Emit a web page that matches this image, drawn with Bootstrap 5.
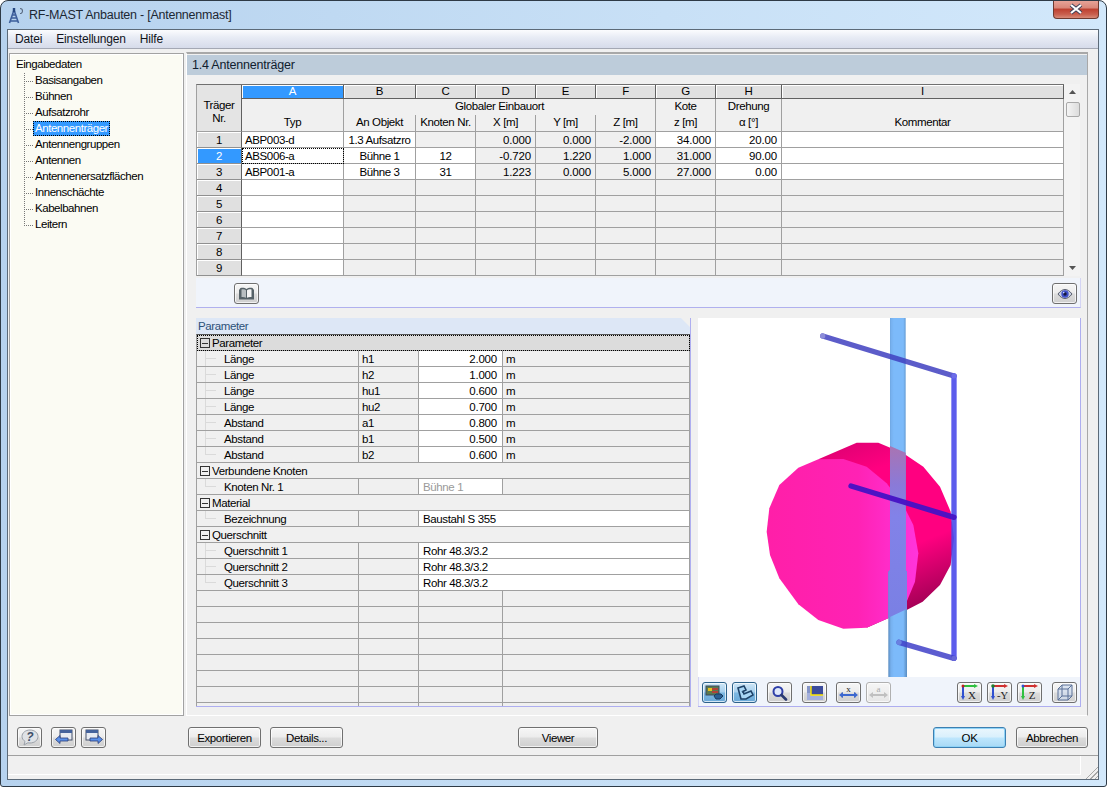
<!DOCTYPE html>
<html lang="de">
<head>
    <meta charset="UTF-8">
    <meta name="viewport" content="width=device-width, initial-scale=1.0">
    <title>RF-MAST Anbauten - [Antennenmast]</title>

    <link href="https://cdn.jsdelivr.net/npm/bootstrap@5.3.0/dist/css/bootstrap.min.css" rel="stylesheet">

    <style>
        html, body { margin: 0; background: #fff; }
        body { font-family: "Liberation Sans", Arial, sans-serif; font-size: 11.5px; line-height: 15px; letter-spacing: -.38px; color: #000; }

        /* window frame */
        .app-window {
            width: 1107px; height: 787px; overflow: hidden;
            border: 1px solid #2e3a46; border-radius: 8px 8px 3px 3px;
            padding: 0 7px 6px 6px;
            background: linear-gradient(90deg, #b6d2ee 0, #c8e0f6 60%, #d2e8fb 100%);
        }
        .title-bar { height: 28px; font-size: 12.5px; letter-spacing: -.24px; color: #1c2733; }
        .app-icon { margin: 1px 4px 0 1px; }
        .close-btn {
            width: 46px; height: 19px; margin-top: -1px; border: 1px solid #6e3a30; border-top: 0;
            border-radius: 0 0 4px 4px; padding: 0;
            background: linear-gradient(#e9a79c 0, #d98678 45%, #bd3f2f 50%, #c9604f 80%, #d78a78 100%);
        }
        .client-area { border: 1px solid #5c6a78; background: #f0f0f0; min-height: 0; }

        /* menu */
        .menu-bar { height: 19px; padding: 0; border-bottom: 1px solid #a4a8b4; background: linear-gradient(#fbfcfe 0, #e8ecf5 40%, #d6dbea 100%); }
        .menu-bar .navbar-nav { margin-left: -7px; }
        .menu-bar.navbar-expand .navbar-nav .nav-link { padding: 1px 0 0 0; margin-left: 14px; color: #10141c; font-size: 12px; letter-spacing: -.18px; }

        .main-area { height: 667px; padding: 3px 10px 0 1px; }

        /* navigation tree */
        .nav-tree { width: 175px; margin-top: 1px; border: 1px solid #a2a2a2; background: #fbfbf3; padding: 3px 0 0 6px; box-shadow: inset 0 0 0 1px #fff; letter-spacing: -.45px; }
        .nav-tree .tree-root { height: 16px; line-height: 15px; }
        .nav-tree ul { margin: 0 0 0 8px; padding: 0; list-style: none; }
        .nav-tree li {
            height: 16px; padding-left: 11px; line-height: 15px;
            background-image: repeating-linear-gradient(90deg, #777 0 1px, transparent 1px 2px), repeating-linear-gradient(180deg, #777 0 1px, transparent 1px 2px);
            background-size: 9px 1px, 1px 100%; background-position: 0 8px, 0 0; background-repeat: no-repeat;
        }
        .nav-tree li:last-child { background-size: 9px 1px, 1px 9px; }
        .nav-tree li.is-active span { display: inline-block; margin-left: -2px; padding: 0 2px; height: 15px; background: #3399ff; color: #fff; outline: 1px dotted #000; outline-offset: -1px; }

        /* right pane */
        .content-pane { width: 902px; margin-left: 2px; border-style: solid; border-width: 2px 1px 1px 1px; border-color: #a8a8a8 #a8a8a8 #fff #fff; }
        .pane-heading { height: 20px; margin-top: 1px; padding-left: 5px; background: #bdccda; font-size: 12.5px; letter-spacing: -.2px; line-height: 20px; color: #10202e; }
        .pane-body { padding: 9px 7px 0 9px; }

        /* spreadsheet tables */
        .sheet { border-collapse: separate; border-spacing: 0; table-layout: fixed; width: auto; }
        .sheet td, .sheet th { padding: 0; border-right: 1px solid #a0a0a0; border-bottom: 1px solid #a0a0a0; background: #f0f0f0; font-weight: 400; height: 16px; line-height: 14px; white-space: nowrap; overflow: hidden; }
        .sheet .is-white { background: #fff; }
        .input-sheet { border-top: 1px solid #707070; border-left: 1px solid #a0a0a0; }
        .input-sheet col:nth-child(1) { width: 45px; }
        .input-sheet col:nth-child(2) { width: 102px; }
        .input-sheet col:nth-child(3) { width: 72px; }
        .input-sheet col:nth-child(n+4) { width: 60px; }
        .input-sheet col:nth-child(9) { width: 66px; }
        .input-sheet col:nth-child(10) { width: 282px; }
        .input-sheet .col-letter { height: 14px; line-height: 12px; padding-bottom: 1px; text-align: center; background: #e0e0e0; border-bottom-color: #606060; border-right-color: #606060; box-shadow: inset 1px 1px 0 #fff; }
        .input-sheet .col-letter.is-selected { background: #3399ff; color: #fff; }
        .input-sheet .row-head { text-align: center; background: #e0e0e0; border-right-color: #606060; border-bottom-color: #909090; box-shadow: inset 1px 1px 0 #fff; }
        .input-sheet .row-head.is-selected { background: #3399ff; color: #fff; }
        .input-sheet .corner-head { background: #e4e4e4; text-align: center; vertical-align: top; padding-top: 14px; line-height: 13px; border-right-color: #606060; }
        .input-sheet .band-top { border-bottom: 0; text-align: center; height: 16px; padding-bottom: 2px; }
        .input-sheet .band-bottom { text-align: center; height: 17px; vertical-align: bottom; padding-bottom: 2px; }
        .input-sheet .band-tall { text-align: center; vertical-align: bottom; padding-bottom: 2px; }
        .input-sheet .num { text-align: right; padding-right: 4px; letter-spacing: -.15px; }
        .input-sheet .ctr { text-align: center; }
        .input-sheet .txt { padding-left: 3px; }
        .input-sheet .is-focus { outline: 1px dotted #000; outline-offset: -1px; }
        .v-scroll { width: 16px; height: 192px; background: #f3f3f3; }
        .v-scroll .scroll-thumb { width: 14px; height: 15px; margin: 2px 0 0 2px; border: 1px solid #a8a8a8; border-radius: 2px; background: linear-gradient(90deg, #f4f4f4, #dcdcdc); }
        .v-scroll .scroll-arrow { height: 16px; }

        .icon-strip { height: 30px; margin-top: 2px; width: 885px; padding: 5px 3px 0 38px; background: #f0f4fb; border-bottom: 1px solid #b0b0ee; border-right: 1px solid #d4d4f4; }

        /* small icon buttons */
        .tool-btn { width: 25px; height: 21px; padding: 0; display: inline-flex; align-items: center; justify-content: center; flex-shrink: 0; border: 1px solid #6f6f6f; border-radius: 3px; background: linear-gradient(#f6f6f6 0, #ececec 48%, #dcdcdc 52%, #cfcfcf 100%); box-shadow: inset 0 0 0 1px rgba(255,255,255,.7); }
        .tool-btn.is-on { border-color: #2c628b; background: linear-gradient(#cfe6f7 0, #a6d0ee 48%, #7db8e2 52%, #6aa9d8 100%); }
        .tool-btn.is-off { border-color: #b0b0b0; background: linear-gradient(#f6f6f6, #e6e6e6); }
        .gap-near { margin-left: 5px; }
        .gap-far { margin-left: 10px; }
        .gap-far-9 { margin-left: 9px; }

        .lower-row { margin-top: 10px; }
        .param-panel { width: 495px; height: 389px; border-right: 1px solid #aeaef0; border-bottom: 1px solid #aeaef0; }
        .param-title { height: 16px; line-height: 16px; padding-left: 2px; color: #2c5078; background: #dde7f6; clip-path: polygon(0 0, calc(100% - 9px) 0, 100% 9px, 100% 100%, 0 100%); }
        .param-wrap { height: 372px; overflow: hidden; border-top: 1px solid #555; border-left: 1px solid #a0a0a0; }
        .param-sheet col:nth-child(1) { width: 162px; }
        .param-sheet col:nth-child(2) { width: 60px; }
        .param-sheet col:nth-child(3) { width: 84px; }
        .param-sheet col:nth-child(4) { width: 187px; }
        .param-sheet tr.group-row td { padding: 1px 0 0 3px; }
        .param-sheet tr.group-row.is-focus td { background: #dcdcdc; outline: 1px dotted #000; outline-offset: -1px; }
        .collapse-box { display: inline-block; width: 10px; height: 10px; margin-right: 2px; border: 1px solid #333; background: linear-gradient(#333,#333) center/6px 1px no-repeat; vertical-align: -1px; }
        .param-sheet .leaf { padding: 1px 0 0 27px;
            background-image: linear-gradient(#dadada,#dadada), linear-gradient(#dadada,#dadada);
            background-size: 11px 1px, 1px 100%; background-position: 8px 7px, 8px 0; background-repeat: no-repeat; }
        .param-sheet .leaf.is-end { background-size: 11px 1px, 1px 8px; }
        .param-sheet .sym { padding-left: 3px; }
        .param-sheet .val { text-align: right; padding-right: 5px; letter-spacing: -.2px; }
        .param-sheet .val-text { padding-left: 4px; }
        .param-sheet .unit { padding-left: 3px; }
        .param-sheet .muted { color: #9a9a9a; padding-left: 4px; }

        .view-panel { width: 383px; height: 389px; margin-left: 7px; border-right: 1px solid #aeaef0; border-bottom: 1px solid #aeaef0; }
        .view-canvas { display: block; background: #fff; }
        .view-tools { height: 29px; padding: 5px 3px 0 3px; background: #f0f4fb; border-left: 1px solid #d4d4f4; }

        /* dialog buttons */
        .footer-row { height: 39px; padding: 11px 10px 0 9px; }
        .dlg-btn { height: 21px; padding: 0; font-size: 11.5px; line-height: 18px; letter-spacing: -.38px; color: #000; border: 1px solid #707070; border-radius: 3px; background: linear-gradient(#f6f6f6 0, #ececec 48%, #dcdcdc 52%, #cfcfcf 100%); box-shadow: inset 0 0 0 1px rgba(255,255,255,.7); }
        .dlg-default { border-color: #3c7fb1; background: linear-gradient(#eaf6fd 0, #d9f0fc 48%, #bee6fd 52%, #a7d9f5 100%); box-shadow: inset 0 0 0 1px #8fd3f7; }
        .w-72 { width: 72px; }
        .w-73 { width: 73px; }
        .w-80 { width: 80px; }
        .btn-export { margin-left: 82px; }
        .btn-viewer { margin-left: 175px; }
        .status-row { height: 24px; border-top: 1px solid #a0a0a0; }
        .status-cell { width: 1073px; height: 19px; border-right: 1px solid #fff; border-bottom: 1px solid #fff; }
        .size-grip { width: 14px; height: 14px; margin-top: 9px; background: repeating-linear-gradient(135deg, transparent 0 2px, #a8a8a8 2px 3px); clip-path: polygon(100% 0, 100% 100%, 0 100%); }
    </style>
</head>
<body>

<div class="app-window d-flex flex-column">

    <div class="title-bar d-flex align-items-center">
        <svg class="app-icon" width="17" height="17" viewBox="0 0 17 17">
            <path d="M6 3 1.500 16M6 3l4.500 13M3.500 11h5M2.500 14h7M4.500 8h3" fill="none" stroke="#3d5f9c" stroke-width="1.600"/>
            <path d="M12 1.500a2.500 2.500 0 1 1 0 5" fill="none" stroke="#5a6a80" stroke-width="1.100"/>
            <path d="M6 1v4" stroke="#24457f" stroke-width="2.400"/>
        </svg>
        <span>RF-MAST Anbauten - [Antennenmast]</span>
        <button type="button" class="close-btn ms-auto align-self-start d-flex align-items-center justify-content-center" aria-label="Schließen">
            <svg width="16" height="12" viewBox="0 0 16 12"><path d="M3 2l10 8M13 2 3 10" stroke="#3a3f58" stroke-width="4"/><path d="M3 2l10 8M13 2 3 10" stroke="#fff" stroke-width="2.200"/></svg>
        </button>
    </div>

    <div class="client-area flex-grow-1 d-flex flex-column">

        <nav class="navbar navbar-expand menu-bar">
            <ul class="navbar-nav">
                <li class="nav-item"><a class="nav-link" href="#">Datei</a></li>
                <li class="nav-item"><a class="nav-link" href="#">Einstellungen</a></li>
                <li class="nav-item"><a class="nav-link" href="#">Hilfe</a></li>
            </ul>
        </nav>

        <div class="main-area d-flex">

            <div class="nav-tree flex-shrink-0">
                <div class="tree-root">Eingabedaten</div>
                <ul>
                    <li><span>Basisangaben</span></li>
                    <li><span>Bühnen</span></li>
                    <li><span>Aufsatzrohr</span></li>
                    <li class="is-active"><span>Antennenträger</span></li>
                    <li><span>Antennengruppen</span></li>
                    <li><span>Antennen</span></li>
                    <li><span>Antennenersatzflächen</span></li>
                    <li><span>Innenschächte</span></li>
                    <li><span>Kabelbahnen</span></li>
                    <li><span>Leitern</span></li>
                </ul>
            </div>

            <div class="content-pane flex-shrink-0">
                <div class="pane-heading">1.4 Antennenträger</div>
                <div class="pane-body">

                    <div class="d-flex">
                        <table class="sheet input-sheet">
                            <colgroup>
                                <col><col><col><col><col><col><col><col><col><col>
                            </colgroup>
                            <thead>
                                <tr>
                                    <th class="corner-head" rowspan="3">Träger<br>Nr.</th>
                                    <th class="col-letter is-selected">A</th>
                                    <th class="col-letter">B</th><th class="col-letter">C</th><th class="col-letter">D</th><th class="col-letter">E</th><th class="col-letter">F</th><th class="col-letter">G</th><th class="col-letter">H</th><th class="col-letter">I</th>
                                </tr>
                                <tr>
                                    <th class="band-tall" rowspan="2">Typ</th>
                                    <th class="band-top" colspan="5">Globaler Einbauort</th>
                                    <th class="band-top">Kote</th>
                                    <th class="band-top">Drehung</th>
                                    <th class="band-tall" rowspan="2">Kommentar</th>
                                </tr>
                                <tr>
                                    <th class="band-bottom">An Objekt</th>
                                    <th class="band-bottom">Knoten Nr.</th>
                                    <th class="band-bottom">X [m]</th>
                                    <th class="band-bottom">Y [m]</th>
                                    <th class="band-bottom">Z [m]</th>
                                    <th class="band-bottom">z [m]</th>
                                    <th class="band-bottom">α [°]</th>
                                </tr>
                            </thead>
                            <tbody>
                                <tr>
                                    <th class="row-head">1</th>
                                    <td class="is-white txt">ABP003-d</td>
                                    <td class="is-white ctr">1.3 Aufsatzro</td>
                                    <td></td>
                                    <td class="num">0.000</td><td class="num">0.000</td><td class="num">-2.000</td>
                                    <td class="is-white num">34.000</td><td class="is-white num">20.00</td><td class="is-white"></td>
                                </tr>
                                <tr>
                                    <th class="row-head is-selected">2</th>
                                    <td class="is-white txt is-focus">ABS006-a</td>
                                    <td class="is-white ctr">Bühne 1</td>
                                    <td class="is-white ctr">12</td>
                                    <td class="num">-0.720</td><td class="num">1.220</td><td class="num">1.000</td>
                                    <td class="num">31.000</td><td class="is-white num">90.00</td><td class="is-white"></td>
                                </tr>
                                <tr>
                                    <th class="row-head">3</th>
                                    <td class="is-white txt">ABP001-a</td>
                                    <td class="is-white ctr">Bühne 3</td>
                                    <td class="is-white ctr">31</td>
                                    <td class="num">1.223</td><td class="num">0.000</td><td class="num">5.000</td>
                                    <td class="num">27.000</td><td class="is-white num">0.00</td><td class="is-white"></td>
                                </tr>
                                <tr><th class="row-head">4</th><td class="is-white"></td><td></td><td></td><td></td><td></td><td></td><td></td><td></td><td></td></tr>
                                <tr><th class="row-head">5</th><td class="is-white"></td><td></td><td></td><td></td><td></td><td></td><td></td><td></td><td></td></tr>
                                <tr><th class="row-head">6</th><td class="is-white"></td><td></td><td></td><td></td><td></td><td></td><td></td><td></td><td></td></tr>
                                <tr><th class="row-head">7</th><td class="is-white"></td><td></td><td></td><td></td><td></td><td></td><td></td><td></td><td></td></tr>
                                <tr><th class="row-head">8</th><td class="is-white"></td><td></td><td></td><td></td><td></td><td></td><td></td><td></td><td></td></tr>
                                <tr><th class="row-head">9</th><td class="is-white"></td><td></td><td></td><td></td><td></td><td></td><td></td><td></td><td></td></tr>
                            </tbody>
                        </table>

                        <div class="v-scroll d-flex flex-column flex-shrink-0">
                            <div class="scroll-arrow d-flex align-items-center justify-content-center"><svg width="7" height="4"><path d="M3.500 0 7 4H0z" fill="#555"/></svg></div>
                            <div class="scroll-thumb"></div>
                            <div class="scroll-arrow mt-auto d-flex align-items-center justify-content-center"><svg width="7" height="4"><path d="M0 0h7L3.500 4z" fill="#555"/></svg></div>
                        </div>
                    </div>

                    <div class="icon-strip d-flex justify-content-between">
                        <button type="button" class="tool-btn" aria-label="Bibliothek">
                            <svg width="17" height="14" viewBox="0 0 17 14"><path d="M1 3 2.500 1c2-.5 4.500-.3 6 1 1.500-1.300 4-1.500 6-1L16 3v9.500H1z" fill="#566268"/><path d="M3.500 2.500c1.800-.4 3.500-.2 4.500.8v7.500c-1.200-.8-2.800-1-4.500-.8z" fill="#b9bfc2"/><path d="M9 3.300c1-1 2.700-1.200 4.500-.8v7.500c-1.700-.2-3.300 0-4.500.8z" fill="#f6f6f6"/></svg>
                        </button>
                        <button type="button" class="tool-btn" aria-label="Ansicht">
                            <svg width="18" height="12" viewBox="0 0 18 12"><path d="M2 6c2.300-3 4.500-4.500 7-4.500s4.700 1.500 7 4.500c-2.300 3-4.500 4.500-7 4.500S4.300 9 2 6z" fill="#c8cfe0" stroke="#5a6070"/><circle cx="9" cy="6" r="3.700" fill="#3f50c8"/><circle cx="9" cy="6" r="1.700" fill="#14183c"/><circle cx="7.700" cy="4.600" r=".8" fill="#cfe0ff"/></svg>
                        </button>
                    </div>

                    <div class="lower-row d-flex">
                        <div class="param-panel flex-shrink-0">
                            <div class="param-title">Parameter</div>
                            <div class="param-wrap">
                                <table class="sheet param-sheet">
                                    <colgroup><col><col><col><col></colgroup>
                                    <tbody>
                                        <tr class="group-row is-focus"><td colspan="4"><span class="collapse-box"></span>Parameter</td></tr>
                                        <tr><td class="leaf">Länge</td><td class="sym">h1</td><td class="is-white val">2.000</td><td class="unit">m</td></tr>
                                        <tr><td class="leaf">Länge</td><td class="sym">h2</td><td class="is-white val">1.000</td><td class="unit">m</td></tr>
                                        <tr><td class="leaf">Länge</td><td class="sym">hu1</td><td class="is-white val">0.600</td><td class="unit">m</td></tr>
                                        <tr><td class="leaf">Länge</td><td class="sym">hu2</td><td class="is-white val">0.700</td><td class="unit">m</td></tr>
                                        <tr><td class="leaf">Abstand</td><td class="sym">a1</td><td class="is-white val">0.800</td><td class="unit">m</td></tr>
                                        <tr><td class="leaf">Abstand</td><td class="sym">b1</td><td class="is-white val">0.500</td><td class="unit">m</td></tr>
                                        <tr><td class="leaf is-end">Abstand</td><td class="sym">b2</td><td class="is-white val">0.600</td><td class="unit">m</td></tr>
                                        <tr class="group-row"><td colspan="4"><span class="collapse-box"></span>Verbundene Knoten</td></tr>
                                        <tr><td class="leaf is-end">Knoten Nr. 1</td><td></td><td class="is-white muted">Bühne 1</td><td></td></tr>
                                        <tr class="group-row"><td colspan="4"><span class="collapse-box"></span>Material</td></tr>
                                        <tr><td class="leaf is-end">Bezeichnung</td><td></td><td class="is-white val-text" colspan="2">Baustahl S 355</td></tr>
                                        <tr class="group-row"><td colspan="4"><span class="collapse-box"></span>Querschnitt</td></tr>
                                        <tr><td class="leaf">Querschnitt 1</td><td></td><td class="is-white val-text" colspan="2">Rohr 48.3/3.2</td></tr>
                                        <tr><td class="leaf">Querschnitt 2</td><td></td><td class="is-white val-text" colspan="2">Rohr 48.3/3.2</td></tr>
                                        <tr><td class="leaf is-end">Querschnitt 3</td><td></td><td class="is-white val-text" colspan="2">Rohr 48.3/3.2</td></tr>
                                        <tr><td></td><td></td><td></td><td></td></tr>
                                        <tr><td></td><td></td><td></td><td></td></tr>
                                        <tr><td></td><td></td><td></td><td></td></tr>
                                        <tr><td></td><td></td><td></td><td></td></tr>
                                        <tr><td></td><td></td><td></td><td></td></tr>
                                        <tr><td></td><td></td><td></td><td></td></tr>
                                        <tr><td></td><td></td><td></td><td></td></tr>
                                        <tr><td></td><td></td><td></td><td></td></tr>
                                    </tbody>
                                </table>
                            </div>
                        </div>

                        <div class="view-panel d-flex flex-column flex-shrink-0">
                            <!-- coordinates taken at 3x from the view's corner at (700,315) -->
                            <svg class="view-canvas" width="382" height="359" viewBox="698 318 382 359">
                                <defs>
                                    <linearGradient id="discSide" x1="0" y1="0" x2="0.3" y2="1">
                                        <stop offset="0" stop-color="#d80070"/><stop offset=".25" stop-color="#ff0080"/><stop offset=".7" stop-color="#ff0080"/><stop offset="1" stop-color="#a80058"/>
                                    </linearGradient>
                                    <linearGradient id="discFront" x1="0" y1="0" x2="1" y2="0">
                                        <stop offset="0" stop-color="#ff1fa8"/><stop offset=".6" stop-color="#ff22b4"/><stop offset="1" stop-color="#ff35dc"/>
                                    </linearGradient>
                                    <linearGradient id="mastFill" x1="0" y1="0" x2="1" y2="0">
                                        <stop offset="0" stop-color="#5a8cc0"/><stop offset=".14" stop-color="#76b0ee"/><stop offset=".3" stop-color="#7cbafa"/><stop offset=".8" stop-color="#7cbafa"/><stop offset="1" stop-color="#5a8cc0"/>
                                    </linearGradient>
                                    <linearGradient id="mastOverDisc" gradientUnits="userSpaceOnUse" x1="0" y1="398" x2="0" y2="910">
                                        <stop offset="0" stop-color="#a874b4"/><stop offset=".22" stop-color="#8a7ad8"/><stop offset=".4" stop-color="#8282e8"/><stop offset="1" stop-color="#7a80e4"/>
                                    </linearGradient>
                                </defs>
                                <g transform="translate(700 315) scale(.33333)">
                                    <path d="M355 433 470 383 535 383 610 415 670 455 720 515 752 590 762 670 752 750 720 810 668 860 620 885 500 938 560 600z" fill="url(#discSide)"/>
                                    <path d="M200 650 208 580 238 510 295 458 355 433 430 432 500 455 560 505 610 570 640 630 655 715 645 800 620 860 565 910 500 938 430 941 355 915 295 868 238 790 210 720z" fill="url(#discFront)"/>
                                    <path d="M570 9H617V765L621 770V1086H565V770L570 765z" fill="url(#mastFill)"/>
                                    <path d="M570 393 617 413V765L621 770V882L565 908V770L570 765z" fill="url(#mastOverDisc)"/>
                                    <g fill="none" stroke-linecap="round" stroke-width="16">
                                        <path d="M368 63 762 183" stroke="#4040c0" stroke-opacity=".85"/>
                                        <path d="M762 183V1030" stroke="#4a4aea" stroke-opacity=".9"/>
                                        <path d="M597 982 762 1030" stroke="#4040c8" stroke-opacity=".85"/>
                                        <path d="M453 513 762 607" stroke="#4512c4" stroke-opacity=".95"/>
                                    </g>
                                    <circle cx="368" cy="63" r="8" fill="#8c8cd8"/>
                                    <circle cx="597" cy="982" r="8" fill="#6a80e0"/>
                                    <circle cx="762" cy="183" r="8" fill="#6c6ce8"/>
                                    <circle cx="762" cy="1030" r="8" fill="#6868d8"/>
                                </g>
                            </svg>
                            <div class="view-tools d-flex justify-content-between">
                                <div class="d-flex">
                                    <button type="button" class="tool-btn is-on" aria-label="Modell">
                                        <svg width="19" height="15" viewBox="0 0 19 15"><rect x="1" y="1" width="13" height="9" fill="#5b7a50" stroke="#3a4a60"/><rect x="3" y="3" width="4" height="3" fill="#e8c020"/><path d="M7 4h6M7 7h6" stroke="#d03030" stroke-width="1.500"/><path d="M11 9h5l2 2-3 3h-4l-2-3z" fill="#2a5f92" stroke="#173a60"/></svg>
                                    </button>
                                    <button type="button" class="tool-btn is-on gap-near" aria-label="Werte">
                                        <svg width="18" height="15" viewBox="0 0 18 15"><path d="M2 3 8 1l2 4-3 1.500L8 9l7-3 2 4-7 4H5z" fill="#a9d6f5" stroke="#1e4268" stroke-width="1.600"/><path d="M6 6.500 8 9" stroke="#1e4268"/></svg>
                                    </button>
                                    <button type="button" class="tool-btn gap-far" aria-label="Zoom">
                                        <svg width="17" height="16" viewBox="0 0 17 16"><circle cx="7" cy="6.500" r="4.500" fill="#dfe8fb" stroke="#2f3fa8" stroke-width="2"/><path d="M10.500 10 15 14.500" stroke="#2a3a70" stroke-width="2.600" stroke-linecap="round"/></svg>
                                    </button>
                                    <button type="button" class="tool-btn gap-far" aria-label="Farben">
                                        <svg width="18" height="16" viewBox="0 0 18 16"><rect x="1" y="8" width="16" height="7" fill="#a4b0dc"/><rect x="1" y="1" width="4" height="7" fill="#8494c8"/><rect x="5" y="1" width="12" height="9" fill="#3c4c9c"/><path d="M5 1v9h12" fill="none" stroke="#ffe800" stroke-width="1.400"/></svg>
                                    </button>
                                    <button type="button" class="tool-btn gap-far-9" aria-label="Bemaßung">
                                        <svg width="21" height="17" viewBox="0 0 21 17"><text x="10.500" y="8" text-anchor="middle" font-family="Liberation Serif, serif" font-size="9" fill="#222">x</text><path d="M4 8.500v5M17 8.500v5" stroke="#667" stroke-width="1"/><path d="M1 11l4-3v2h11V8l4 3-4 3v-2H5v2z" fill="#3c68d0"/></svg>
                                    </button>
                                    <button type="button" class="tool-btn is-off gap-near" aria-label="Bezeichnung">
                                        <svg width="21" height="17" viewBox="0 0 21 17"><text x="10.500" y="8" text-anchor="middle" font-family="Liberation Serif, serif" font-size="9" fill="#aaa">a</text><path d="M1 11l4-3v2h11V8l4 3-4 3v-2H5v2z" fill="#c0c0c0"/></svg>
                                    </button>
                                </div>
                                <div class="d-flex">
                                    <button type="button" class="tool-btn" aria-label="Ansicht X">
                                        <svg width="21" height="17" viewBox="0 0 21 17"><path d="M4 2h13" stroke="#30c040" stroke-width="2"/><path d="M15 0l4 2-4 2z" fill="#30c040"/><path d="M4 2v12" stroke="#3050d0" stroke-width="2"/><path d="M2 12l2 4 2-4z" fill="#3050d0"/><circle cx="4" cy="2" r="1.500" fill="#c02020"/><text x="13" y="15" text-anchor="middle" font-family="Liberation Serif, serif" font-size="11" fill="#222">X</text></svg>
                                    </button>
                                    <button type="button" class="tool-btn gap-near" aria-label="Ansicht Y">
                                        <svg width="21" height="17" viewBox="0 0 21 17"><path d="M4 2h13" stroke="#d03030" stroke-width="2"/><path d="M15 0l4 2-4 2z" fill="#d03030"/><path d="M4 2v12" stroke="#3050d0" stroke-width="2"/><path d="M2 12l2 4 2-4z" fill="#3050d0"/><circle cx="4" cy="2" r="1.800" fill="#208030"/><text x="13.500" y="15" text-anchor="middle" font-family="Liberation Serif, serif" font-size="10.500" fill="#222">-Y</text></svg>
                                    </button>
                                    <button type="button" class="tool-btn gap-near" aria-label="Ansicht Z">
                                        <svg width="21" height="17" viewBox="0 0 21 17"><path d="M4 2h13" stroke="#d03030" stroke-width="2"/><path d="M15 0l4 2-4 2z" fill="#d03030"/><path d="M4 2v12" stroke="#30c040" stroke-width="2"/><path d="M2 12l2 4 2-4z" fill="#30c040"/><circle cx="4" cy="2" r="1.500" fill="#3050d0"/><text x="13" y="15" text-anchor="middle" font-family="Liberation Serif, serif" font-size="11" fill="#222">Z</text></svg>
                                    </button>
                                    <button type="button" class="tool-btn gap-far" aria-label="Isometrie">
                                        <svg width="18" height="17" viewBox="0 0 18 17"><path d="M2 5 6 1h10v11l-4 4H2z" fill="#cfdbee" fill-opacity=".7" stroke="#5b7198"/><path d="M2 5h10v11M12 5l4-4M2 16l4-4V1M6 12h10" fill="none" stroke="#5b7198" stroke-width="1"/></svg>
                                    </button>
                                </div>
                            </div>
                        </div>
                    </div>
                </div>
            </div>
        </div>

        <div class="footer-row d-flex">
            <button type="button" class="tool-btn" aria-label="Hilfe">
                <svg width="18" height="17" viewBox="0 0 18 17"><path d="M9 1c4.500 0 8 2.800 8 6.500S13.500 14 9 14c-.8 0-1.500-.1-2.200-.2L3 16l1-3.600C2.200 11.200 1 9.500 1 7.500 1 3.800 4.500 1 9 1z" fill="#dfe2e6" stroke="#9aa0a8"/><text x="9" y="12" text-anchor="middle" font-family="Liberation Sans, sans-serif" font-weight="700" font-style="italic" font-size="12" fill="#3e4e68">?</text></svg>
            </button>
            <button type="button" class="tool-btn gap-far-9" aria-label="Zurück">
                <svg width="20" height="17" viewBox="0 0 20 17"><rect x="6" y="1" width="12" height="10" fill="#e6eaf2" stroke="#44506a"/><path d="M6 1h12v3H6z" fill="#44629c"/><path d="M1.500 10.500l4.500-4v2.500h8v3H6v2.500z" fill="#5a8fe8" stroke="#283c7a" stroke-width=".8"/></svg>
            </button>
            <button type="button" class="tool-btn gap-near" aria-label="Weiter">
                <svg width="20" height="17" viewBox="0 0 20 17"><rect x="2" y="1" width="12" height="10" fill="#e6eaf2" stroke="#44506a"/><path d="M2 1h12v3H2z" fill="#44629c"/><path d="M18.500 10.500l-4.500-4v2.500H6v3h8v2.500z" fill="#5a8fe8" stroke="#283c7a" stroke-width=".8"/></svg>
            </button>
            <button type="button" class="btn dlg-btn w-73 btn-export">Exportieren</button>
            <button type="button" class="btn dlg-btn w-73 gap-far-9">Details...</button>
            <button type="button" class="btn dlg-btn w-80 btn-viewer">Viewer</button>
            <button type="button" class="btn dlg-btn dlg-default w-73 ms-auto">OK</button>
            <button type="button" class="btn dlg-btn w-72 gap-far">Abbrechen</button>
        </div>

        <div class="status-row d-flex">
            <div class="status-cell"></div>
            <div class="size-grip ms-auto"></div>
        </div>
    </div>
</div>

<script src="https://cdn.jsdelivr.net/npm/bootstrap@5.3.0/dist/js/bootstrap.bundle.min.js"></script>
</body>
</html>
